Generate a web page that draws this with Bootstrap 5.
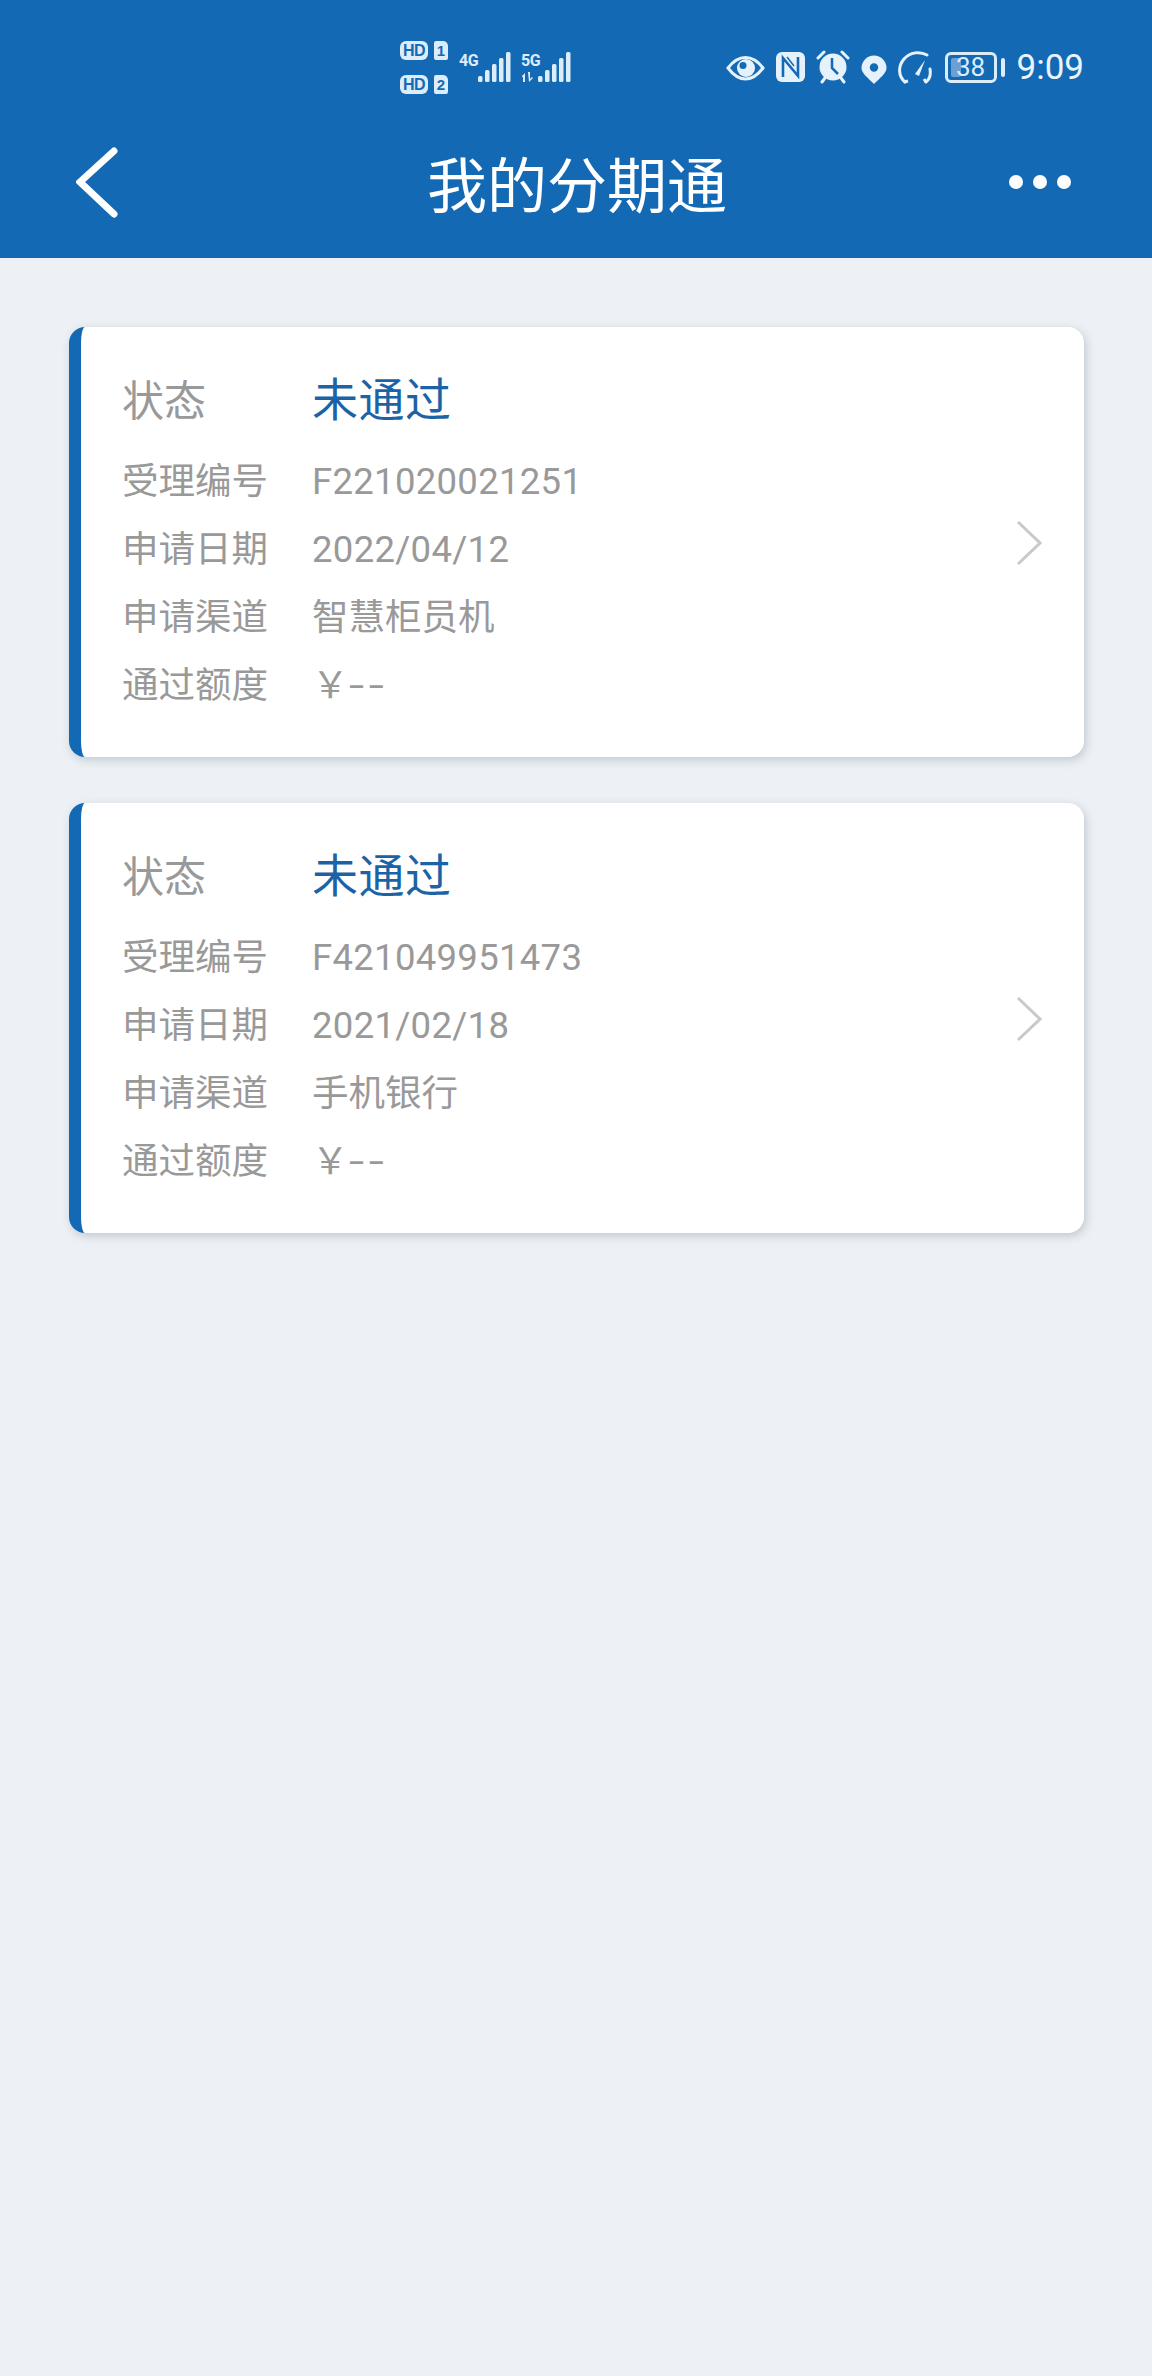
<!DOCTYPE html>
<html lang="zh-CN">
<head>
<meta charset="utf-8">
<title>我的分期通</title>
<link href="https://cdn.jsdelivr.net/npm/bootstrap@5.3.0/dist/css/bootstrap.min.css" rel="stylesheet">
<style>
html,body{height:100%}
body{background:#edf1f5;font-family:"Noto Sans CJK SC","Noto Sans",sans-serif;width:1152px;min-height:2376px}
.app-head{background:#1469b5;height:258px;color:#fff}
.sbar{height:112px;padding:41px 68px 0 400px;color:#e6f2fb}
.sim-stack{gap:15px;width:48px}
.sim-line{gap:6px;height:19px}
.hd-tag{width:28px;height:19px;background:#dcedf9;color:#1469b5;border-radius:6px;font:700 16px/19px "Liberation Sans",sans-serif;text-align:center;letter-spacing:-.5px}
.sim-no{width:14px;height:19px;background:#dcedf9;color:#1469b5;border-radius:2px 5px 2px 2px;font:700 15px/19px "Liberation Sans",sans-serif;text-align:center}
.net-lbl{font:700 16px/15px "Roboto",sans-serif;letter-spacing:-.5px;width:18px;margin-top:12px;color:#dcedf9}
.net-a{margin-left:11px}
.net-b{margin-left:10px}
.net-b .net-lbl{width:16px}
.sig-svg{margin-top:11px;display:block;overflow:visible}
.right-ic{gap:11px;padding-top:3px}
.right-ic svg{display:block}
.eye-ic{margin-top:2px}
.batt-box{width:52px;height:31px;border:3px solid #dcedf9;border-radius:6px;position:relative;margin-top:8px;margin-left:1px}
.batt-fill{position:absolute;left:3px;top:3px;bottom:3px;width:10px;background:#6d9fd3;border-radius:2px}
.batt-num{position:absolute;inset:0;text-align:center;font:400 26px/25px "Roboto",sans-serif;color:#dcedf9}
.batt-nub{width:4px;height:19px;background:#dcedf9;border-radius:2px;margin-left:-7px;margin-top:14px}
.clock-txt{font:400 35px/35px "Roboto",sans-serif;color:#e9f4fc;margin-left:1px;margin-top:6px}
.title-bar{height:146px;padding:0 81px 6px 76px}
.back-wrap{width:69px}
.back-wrap svg{display:block}
.title-txt{font-size:60px;line-height:1;font-weight:400;margin:0;color:#fff}
.dots-wrap{gap:10px}
.dot-one{width:14px;height:14px;border-radius:50%;background:#fff}
.list-area{padding:69px 68px 0 69px;gap:46px}
.loan-card{height:430px;border:0;border-left:12px solid #1469b5;border-radius:16px;background:#fff;box-shadow:2px 3px 10px rgba(90,105,125,.3);padding:35px 42px 40px 41px}
.row-line{height:68px;line-height:68px;font-size:36.5px;color:#999}
.row-lbl{width:190px;flex:none}
.row-val{font-family:"Roboto","Noto Sans CJK SC",sans-serif;letter-spacing:.3px}
.row-cjk{font-family:"Noto Sans CJK SC",sans-serif}
.row-dash{font-family:"Roboto",sans-serif;display:inline-block;letter-spacing:3px;transform:scaleX(1.5);transform-origin:left center}
.row-head{font-size:42px;margin-bottom:15px}
.row-state{font-size:46px;letter-spacing:.5px;color:#1b63a6}
.go-ic{margin-top:6px}
</style>
</head>
<body>
<header class="app-head">
  <div class="sbar d-flex align-items-start">
    <div class="sim-stack d-flex flex-column">
      <div class="sim-line d-flex"><span class="hd-tag">HD</span><span class="sim-no">1</span></div>
      <div class="sim-line d-flex"><span class="hd-tag">HD</span><span class="sim-no">2</span></div>
    </div>
    <div class="d-flex net-a">
      <span class="net-lbl">4G</span>
      <svg class="sig-svg" width="34" height="31" viewBox="0 0 34 31" fill="#dcedf9"><rect x="1" y="24" width="4.500" height="6" rx="1.500"/><rect x="8" y="18" width="4.500" height="12" rx="1.500"/><rect x="15" y="12" width="4.500" height="18" rx="1.500"/><rect x="22" y="6" width="4.500" height="24" rx="1.500"/><rect x="29" y="0" width="4.500" height="30" rx="1.500"/></svg>
    </div>
    <div class="d-flex net-b">
      <span class="net-lbl">5G</span>
      <svg class="sig-svg" width="34" height="31" viewBox="0 0 34 31" fill="#dcedf9"><path d="M-15 24l3-3v9h-2v-5l-1 0zM-9 20h2v7l2-2 1 1-4 4z"/><rect x="1" y="24" width="4.500" height="6" rx="1.500"/><rect x="8" y="18" width="4.500" height="12" rx="1.500"/><rect x="15" y="12" width="4.500" height="18" rx="1.500"/><rect x="22" y="6" width="4.500" height="24" rx="1.500"/><rect x="29" y="0" width="4.500" height="30" rx="1.500"/></svg>
    </div>
    <div class="right-ic d-flex align-items-start ms-auto">
      <svg class="eye-ic" width="39" height="45" viewBox="0 0 39 45"><path d="M2 22C8 14 13 11.500 19.500 11.500S31 14 37 22C31 30 26 33 19.500 33S8 30 2 22Z" fill="none" stroke="#e6f2fb" stroke-width="3"/><circle cx="20" cy="22" r="9" fill="#e6f2fb"/><circle cx="17" cy="19.500" r="3.500" fill="#1469b5"/></svg>
      <svg width="29" height="45" viewBox="0 0 29 45"><rect y="8" width="29" height="30" rx="6" fill="#e6f2fb"/><path d="M7 33V14l15 18V13" fill="none" stroke="#1469b5" stroke-width="2.600"/><path d="M11 13l7 9" stroke="#1469b5" stroke-width="1.500"/></svg>
      <svg width="34" height="45" viewBox="0 0 34 45"><circle cx="17" cy="23" r="13.500" fill="#e6f2fb"/><path d="M2 14l6-6M32 14l-6-6M6 38l3-4M28 38l-3-4" stroke="#e6f2fb" stroke-width="3" stroke-linecap="round"/><path d="M16 14v10l6 6" fill="none" stroke="#1469b5" stroke-width="2.500"/></svg>
      <svg width="26" height="45" viewBox="0 0 26 45"><path d="M13 40C7 34 .5 29 .5 24A12.500 12.500 0 0 1 25.500 24C25.500 29 19 34 13 40Z" fill="#e6f2fb"/><circle cx="13" cy="23.500" r="4.200" fill="#1469b5"/></svg>
      <svg width="35" height="45" viewBox="0 0 35 45"><path d="M7 38C0 32 0 22 6 15C12 8 22 7 29 11M32 25C33 31 32 35 28 38" fill="none" stroke="#e6f2fb" stroke-width="3" stroke-linecap="round"/><path d="M6 38l4-1M28 38l-2-3" stroke="#e6f2fb" stroke-width="3"/><path d="M17 30l10-14-6 16z" fill="#e6f2fb"/></svg>
      <div class="batt-box"><span class="batt-fill"></span><span class="batt-num">38</span></div>
      <span class="batt-nub"></span>
      <span class="clock-txt">9:09</span>
    </div>
  </div>
  <div class="title-bar d-flex align-items-center justify-content-between">
    <div class="back-wrap"><svg width="44" height="72" viewBox="0 0 44 72"><path d="M38 5L4 36l34 32" fill="none" stroke="#fff" stroke-width="7" stroke-linecap="round"/></svg></div>
    <h1 class="title-txt">我的分期通</h1>
    <div class="dots-wrap d-flex"><span class="dot-one"></span><span class="dot-one"></span><span class="dot-one"></span></div>
  </div>
</header>
<main class="list-area d-flex flex-column">
  <section class="card loan-card flex-row align-items-center">
    <div class="flex-grow-1">
      <div class="row-line row-head d-flex align-items-baseline"><span class="row-lbl">状态</span><span class="row-state">未通过</span></div>
      <div class="row-line d-flex align-items-baseline"><span class="row-lbl">受理编号</span><span class="row-val">F221020021251</span></div>
      <div class="row-line d-flex align-items-baseline"><span class="row-lbl">申请日期</span><span class="row-val">2022/04/12</span></div>
      <div class="row-line d-flex align-items-baseline"><span class="row-lbl">申请渠道</span><span class="row-cjk">智慧柜员机</span></div>
      <div class="row-line d-flex align-items-baseline"><span class="row-lbl">通过额度</span><span class="row-val">￥<span class="row-dash">--</span></span></div>
    </div>
    <svg class="go-ic" width="26" height="46" viewBox="0 0 26 46"><path d="M2 2l22 21L2 44" fill="none" stroke="#c9c9c9" stroke-width="3"/></svg>
  </section>
  <section class="card loan-card flex-row align-items-center">
    <div class="flex-grow-1">
      <div class="row-line row-head d-flex align-items-baseline"><span class="row-lbl">状态</span><span class="row-state">未通过</span></div>
      <div class="row-line d-flex align-items-baseline"><span class="row-lbl">受理编号</span><span class="row-val">F421049951473</span></div>
      <div class="row-line d-flex align-items-baseline"><span class="row-lbl">申请日期</span><span class="row-val">2021/02/18</span></div>
      <div class="row-line d-flex align-items-baseline"><span class="row-lbl">申请渠道</span><span class="row-cjk">手机银行</span></div>
      <div class="row-line d-flex align-items-baseline"><span class="row-lbl">通过额度</span><span class="row-val">￥<span class="row-dash">--</span></span></div>
    </div>
    <svg class="go-ic" width="26" height="46" viewBox="0 0 26 46"><path d="M2 2l22 21L2 44" fill="none" stroke="#c9c9c9" stroke-width="3"/></svg>
  </section>
</main>
<script src="https://cdn.jsdelivr.net/npm/bootstrap@5.3.0/dist/js/bootstrap.bundle.min.js"></script>
</body>
</html>
